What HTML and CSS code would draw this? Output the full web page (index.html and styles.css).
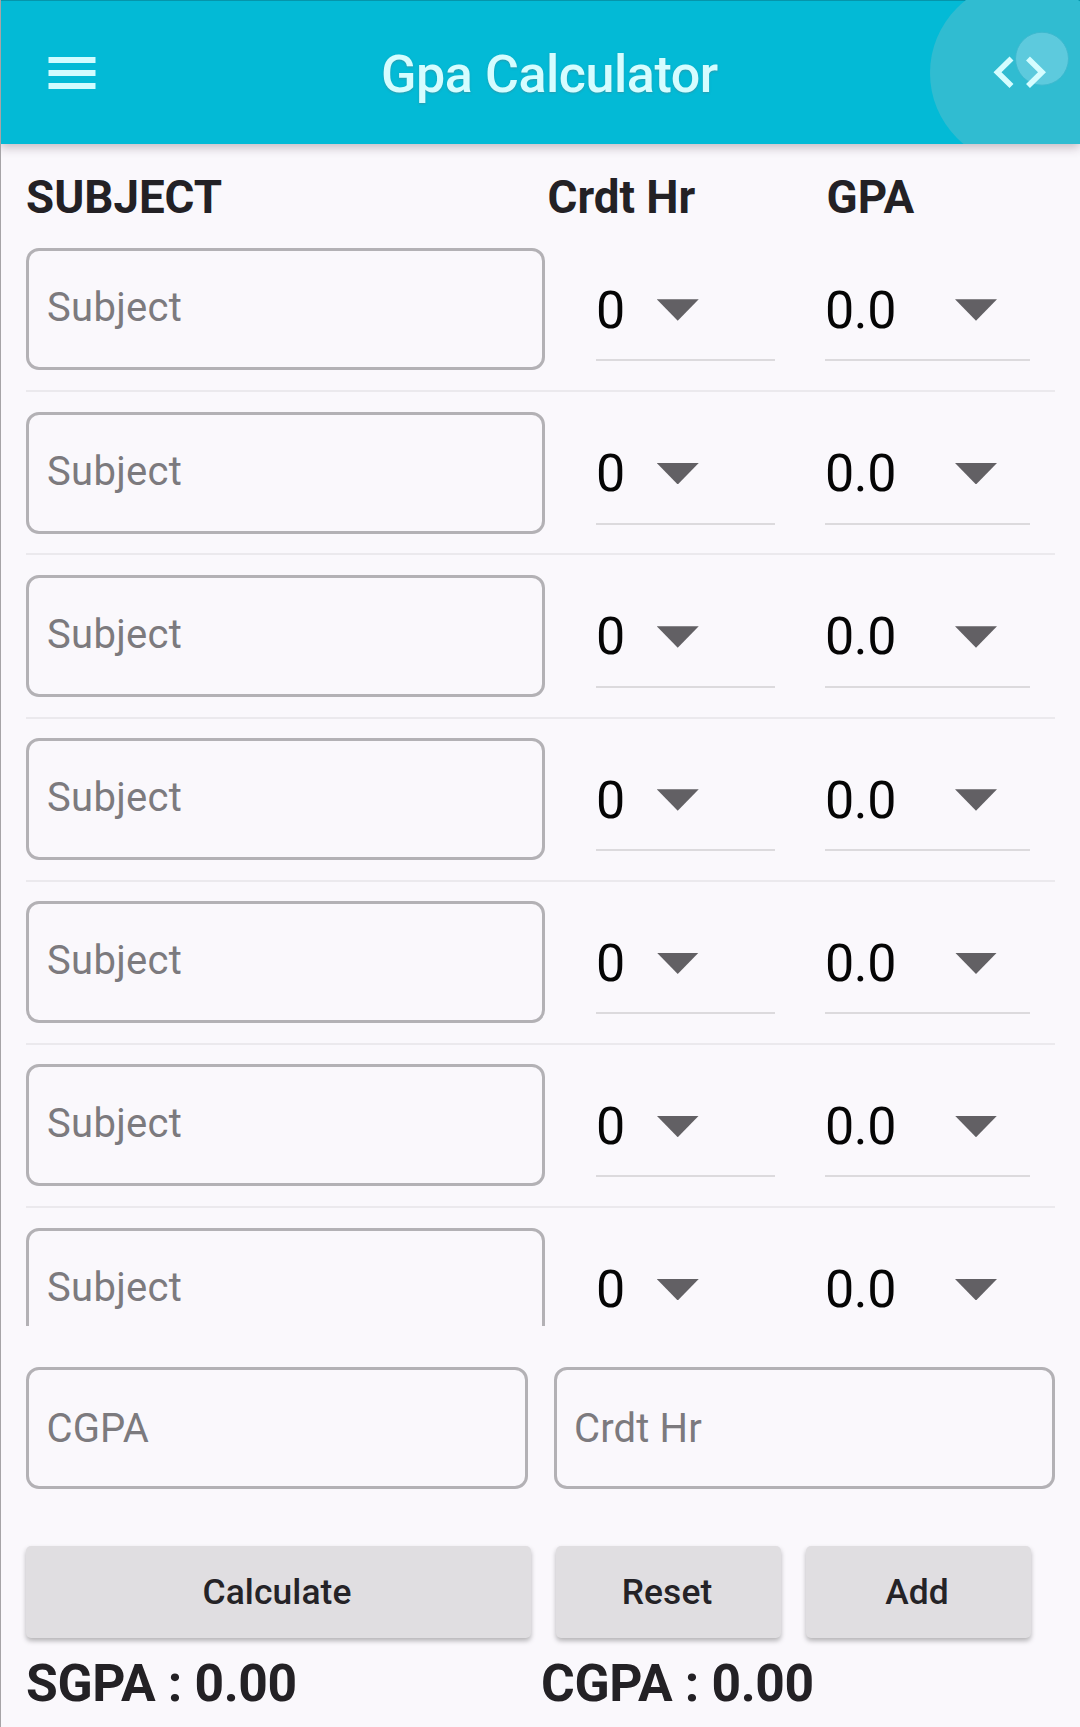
FILE: index.html
```
<!DOCTYPE html>
<html lang="en">
<head>
<meta charset="utf-8">
<title>Gpa Calculator</title>
<link rel="stylesheet" href="styles.css">
</head>
<body>
<div class="screen">
  <header class="appbar">
    <svg class="menu" viewBox="0 0 48 32" aria-label="Menu"><path d="M.5 0h47v6H.5zM.5 13h47v6H.5zM.5 26h47v6H.5z"/></svg>
    <h1 class="title">Gpa Calculator</h1>
    <svg class="code" viewBox="0 0 152 144" aria-label="Code">
      <circle class="ripple" cx="94" cy="73" r="92"/>
      <circle class="touch" cx="114" cy="58.7" r="26.5"/>
      <path class="chevrons" d="M83.5 58.5L69.5 72.2L83.5 86M100 58.5L114 72.2L100 86"/>
    </svg>
  </header>
  <main class="content">
    <div class="heads"><span>SUBJECT</span><span>Crdt Hr</span><span>GPA</span></div>
    <div class="list">
      <div class="row"><div class="field"><span>Subject</span></div><div class="select credit"><span>0</span><i class="arrow"></i></div><div class="select grade"><span>0.0</span><i class="arrow"></i></div></div>
      <div class="row"><div class="field"><span>Subject</span></div><div class="select credit"><span>0</span><i class="arrow"></i></div><div class="select grade"><span>0.0</span><i class="arrow"></i></div></div>
      <div class="row"><div class="field"><span>Subject</span></div><div class="select credit"><span>0</span><i class="arrow"></i></div><div class="select grade"><span>0.0</span><i class="arrow"></i></div></div>
      <div class="row"><div class="field"><span>Subject</span></div><div class="select credit"><span>0</span><i class="arrow"></i></div><div class="select grade"><span>0.0</span><i class="arrow"></i></div></div>
      <div class="row"><div class="field"><span>Subject</span></div><div class="select credit"><span>0</span><i class="arrow"></i></div><div class="select grade"><span>0.0</span><i class="arrow"></i></div></div>
      <div class="row"><div class="field"><span>Subject</span></div><div class="select credit"><span>0</span><i class="arrow"></i></div><div class="select grade"><span>0.0</span><i class="arrow"></i></div></div>
      <div class="row"><div class="field"><span>Subject</span></div><div class="select credit"><span>0</span><i class="arrow"></i></div><div class="select grade"><span>0.0</span><i class="arrow"></i></div></div>
    </div>
    <div class="totals"><div class="field total"><span>CGPA</span></div><div class="field total"><span>Crdt Hr</span></div></div>
    <div class="actions"><button>Calculate</button><button>Reset</button><button>Add</button></div>
    <div class="results"><span>SGPA : 0.00</span><span>CGPA : 0.00</span></div>
  </main>
</div>
</body>
</html>
```

FILE: styles.css
```
* { box-sizing: border-box; }
body { margin: 0; background: #faf8fc; font-family: Roboto, sans-serif; color: #232125; }
.screen { height: 1727px; overflow: hidden; border-left: 1px solid #a6a4a7; }
.appbar {
  height: 144px; display: flex; align-items: center;
  padding-left: 47px; background: #03bad6; border-top: 1px solid #0595ab;
  margin-left: -1px; border-left: 1px solid #0595ab;
  box-shadow: 0 3px 10px rgba(60, 30, 50, .3);
}
.menu { width: 48px; height: 32px; fill: #d2fcff; flex: none; }
.title {
  margin: 0 0 0 285px; padding-top: 4px; font-size: 52px; line-height: 60px; font-weight: 500;
  letter-spacing: -.43px; color: #d5fdff; white-space: nowrap; text-shadow: 0 1px 2px rgba(90, 120, 130, .5);
}
.code { width: 152px; height: 144px; margin: -1px 0 0 auto; flex: none; }
.ripple { fill: #30bcd1; }
.touch { fill: #5dcadd; stroke: #3db9cf; stroke-width: 1; }
.chevrons { fill: none; stroke: #d5fdff; stroke-width: 5.6; }
.content { padding: 0 24px 0 25px; }
.heads {
  display: grid; grid-template-columns: 521.5px 279px 1fr; height: 104px;
  padding-top: 24px; line-height: 60px; font-size: 45.7px; font-weight: 700;
}
.list { height: 1078px; overflow: hidden; }
.row {
  height: 163.2px; display: flex; align-items: flex-start;
  border-bottom: 2px solid #ebe9ed; margin-right: 1px;
}
.row + .row { padding-top: 19.4px; }
.row:first-child { height: 144.3px; }
.field {
  height: 122px; width: 519px; border: 3px solid #b3b1b5; border-radius: 13px;
  padding: 0 0 3px 18px; display: flex; align-items: center; flex: none;
  font-size: 40px; letter-spacing: .3px; color: #7c7a7e;
}
.select {
  height: 113px; display: flex; align-items: center; border-bottom: 2px solid #dcdadd;
  font-size: 52px; color: #050505; line-height: 60px; padding-top: 13px;
}
.select span { padding-top: 1px; }
.credit { width: 179px; margin-left: 51px; }
.grade { width: 205px; margin-left: 50px; letter-spacing: -.4px; justify-content: space-between; padding-right: 33px; }
.arrow { width: 42px; height: 21.5px; background: #626064; clip-path: polygon(0 0, 100% 0, 50% 100%); }
.credit .arrow { margin-left: 31.5px; }
.totals { display: flex; justify-content: space-between; margin: 41px 1px 0 0; }
.total { width: 501.5px; padding: 0 0 0 17.5px; letter-spacing: .15px; }
.actions { display: grid; grid-template-columns: 505px 225px 225px; column-gap: 25px; margin: 56.5px 0 0 0; }
button {
  height: 92px; border: 0; border-radius: 5px; padding: 0 3px 0 0; background: #e0dee1; color: #252327;
  font: 500 35.4px/60px Roboto, sans-serif; letter-spacing: .1px; box-shadow: 0 3px 5px rgba(0, 0, 0, .28);
}
.results {
  display: grid; grid-template-columns: 515px 1fr; margin-top: 16.5px;
  line-height: 60px; font-size: 51.6px; letter-spacing: -.35px; font-weight: 700;
}
```
